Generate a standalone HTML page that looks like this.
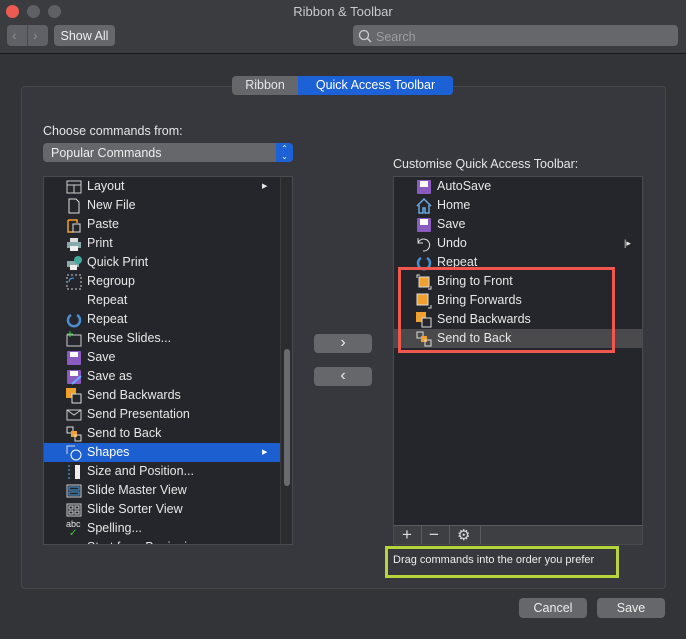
<!DOCTYPE html>
<html><head><meta charset="utf-8"><style>
*{box-sizing:border-box;margin:0;padding:0}
body{width:686px;height:639px;background:#323438;font-family:"Liberation Sans",sans-serif;color:#e6e6e6;position:relative;overflow:hidden;font-size:12px}
.abs{position:absolute}
.title{left:0;top:0;width:686px;height:54px;background:#3b3c40;border-bottom:1px solid #161719}
.dot{width:13px;height:13px;border-radius:50%;top:5px;background:#5f6064}
.btn{background:#65676b;border-radius:4px;color:#eee;text-align:center}
.list{background:#24262b;border:1px solid #4a4b4f}
.row{position:absolute;left:0;height:19px;line-height:19px;font-size:12.5px;color:#e8e8e8;white-space:nowrap}
.row .t{position:absolute;left:43px}
.row .i{position:absolute;left:22px;top:2px;width:16px;height:16px}
</style></head><body>
<div class="abs title"></div>
<div class="abs dot" style="left:6px;background:#ed5a52"></div>
<div class="abs dot" style="left:27px"></div>
<div class="abs dot" style="left:48px"></div>
<div class="abs" style="left:0;width:686px;top:4px;text-align:center;font-size:13px;color:#c9c9cb">Ribbon &amp; Toolbar</div>
<div class="abs btn" style="left:7px;top:25px;width:41px;height:21px;background:#606166"></div>
<div class="abs" style="left:27px;top:25px;width:1px;height:21px;background:#48494d"></div>
<div class="abs" style="left:12px;top:27px;color:#8e8f93;font-size:14px">‹</div>
<div class="abs" style="left:33px;top:27px;color:#8e8f93;font-size:14px">›</div>
<div class="abs btn" style="left:54px;top:25px;width:61px;height:21px;line-height:23px;font-size:12.5px">Show All</div>
<div class="abs" style="left:353px;top:25px;width:325px;height:21px;background:#65676b;border-radius:4px"></div>
<svg class="abs" style="left:358px;top:29px" width="14" height="14"><circle cx="6" cy="6" r="4.5" stroke="#ccc" fill="none" stroke-width="1.3"/><line x1="9.3" y1="9.3" x2="13" y2="13" stroke="#ccc" stroke-width="1.5"/></svg>
<div class="abs" style="left:376px;top:30px;color:#9d9ea2;font-size:12.5px">Search</div>

<div class="abs" style="left:21px;top:86px;width:645px;height:503px;border:1px solid #46474b;border-radius:4px;background:#36383d"></div>
<div class="abs btn" style="left:232px;top:76px;width:221px;height:19px;border-radius:4px"></div>
<div class="abs" style="left:298px;top:76px;width:155px;height:19px;background:#1c61d6;border-radius:0 4px 4px 0"></div>
<div class="abs" style="left:232px;top:78px;width:66px;text-align:center;font-size:12.5px">Ribbon</div>
<div class="abs" style="left:298px;top:78px;width:155px;text-align:center;font-size:12.5px;color:#fff">Quick Access Toolbar</div>

<div class="abs" style="left:43px;top:124px;font-size:12.5px">Choose commands from:</div>
<div class="abs btn" style="left:43px;top:143px;width:250px;height:19px;text-align:left;padding-left:8px;line-height:21px;font-size:12.5px">Popular Commands</div>
<div class="abs" style="left:276px;top:143px;width:17px;height:19px;background:#1c61d6;border-radius:0 4px 4px 0;color:#fff;font-size:8px;text-align:center;line-height:8px;padding-top:2px">⌃<br>⌄</div>
<div class="abs" style="left:393px;top:157px;font-size:12.5px">Customise Quick Access Toolbar:</div>

<div class="abs list" style="left:43px;top:176px;width:250px;height:369px;overflow:hidden">
<div class="abs" style="left:236px;top:0;width:13px;height:369px;background:#2b2c30;border-left:1px solid #3a3b3f"></div>
<div class="abs" style="left:240px;top:172px;width:6px;height:137px;border-radius:3px;background:#6a6b6f"></div>
<div class="row" style="top:0;width:236px"><svg class="i" viewBox="0 0 16 16"><rect x="1" y="2" width="14" height="12" fill="none" stroke="#ccc"/><line x1="1" y1="6" x2="15" y2="6" stroke="#ccc"/><line x1="8" y1="6" x2="8" y2="14" stroke="#ccc"/></svg><span class="t">Layout</span><span style="position:absolute;left:218px;font-size:7px">▶</span></div>
<div class="row" style="top:19px"><svg class="i" viewBox="0 0 16 16"><path d="M3 1h7l3 3v11H3z" fill="none" stroke="#ddd"/></svg><span class="t">New File</span></div>
<div class="row" style="top:38px"><svg class="i" viewBox="0 0 16 16"><path d="M2 3h9v3M2 3v12h5" fill="none" stroke="#f0a030" stroke-width="1.5"/><rect x="7" y="7" width="7" height="8" fill="none" stroke="#ddd"/></svg><span class="t">Paste</span></div>
<div class="row" style="top:57px"><svg class="i" viewBox="0 0 16 16"><rect x="1" y="6" width="14" height="6" fill="#8aa"/><rect x="4" y="2" width="8" height="4" fill="#ddd"/><rect x="4" y="10" width="8" height="5" fill="#eee"/></svg><span class="t">Print</span></div>
<div class="row" style="top:76px"><svg class="i" viewBox="0 0 16 16"><rect x="1" y="6" width="12" height="6" fill="#8aa"/><rect x="4" y="10" width="7" height="5" fill="#eee"/><circle cx="12" cy="5" r="4" fill="#4a9"/></svg><span class="t">Quick Print</span></div>
<div class="row" style="top:95px"><svg class="i" viewBox="0 0 16 16"><rect x="1" y="1" width="14" height="14" fill="none" stroke="#ccc" stroke-dasharray="2 2"/><path d="M3 8q0-4 5-4" stroke="#4af" fill="none"/></svg><span class="t">Regroup</span></div>
<div class="row" style="top:114px"><span class="t">Repeat</span></div>
<div class="row" style="top:133px"><svg class="i" viewBox="0 0 16 16"><path d="M5 3a6 6 0 1 0 6 0" fill="none" stroke="#4a8fd0" stroke-width="2.5"/></svg><span class="t">Repeat</span></div>
<div class="row" style="top:152px"><svg class="i" viewBox="0 0 16 16"><rect x="1" y="4" width="14" height="11" fill="none" stroke="#ccc"/><path d="M4 0v6M1 3h6" stroke="#4c4"/></svg><span class="t">Reuse Slides...</span></div>
<div class="row" style="top:171px"><svg class="i" viewBox="0 0 16 16"><rect x="1" y="1" width="14" height="14" rx="1" fill="#8a5cc0"/><rect x="4" y="2" width="8" height="5" fill="#fff"/></svg><span class="t">Save</span></div>
<div class="row" style="top:190px"><svg class="i" viewBox="0 0 16 16"><rect x="1" y="1" width="14" height="14" rx="1" fill="#8a5cc0"/><rect x="4" y="2" width="8" height="5" fill="#fff"/><line x1="6" y1="15" x2="15" y2="7" stroke="#6af" stroke-width="2"/></svg><span class="t">Save as</span></div>
<div class="row" style="top:209px"><svg class="i" viewBox="0 0 16 16"><rect x="0" y="0" width="10" height="10" fill="#f0a030"/><rect x="6" y="6" width="9" height="9" fill="#24262b" stroke="#ddd"/></svg><span class="t">Send Backwards</span></div>
<div class="row" style="top:228px"><svg class="i" viewBox="0 0 16 16"><rect x="1" y="3" width="14" height="10" fill="none" stroke="#ccc"/><path d="M1 3l7 5 7-5" stroke="#ccc" fill="none"/></svg><span class="t">Send Presentation</span></div>
<div class="row" style="top:247px"><svg class="i" viewBox="0 0 16 16"><rect x="1" y="1" width="6" height="6" fill="none" stroke="#ddd"/><rect x="5" y="5" width="6" height="6" fill="#f0a030"/><rect x="9" y="9" width="6" height="6" fill="none" stroke="#ddd"/></svg><span class="t">Send to Back</span></div>
<div class="row" style="top:266px;width:236px;background:#1c5fd1;color:#fff"><svg class="i" viewBox="0 0 16 16"><path d="M1 9V1h8" stroke="#ddd" fill="none"/><circle cx="10" cy="10" r="5" fill="none" stroke="#fff"/></svg><span class="t">Shapes</span><span style="position:absolute;left:218px;font-size:7px">▶</span></div>
<div class="row" style="top:285px"><svg class="i" viewBox="0 0 16 16"><rect x="9" y="1" width="5" height="14" fill="#eee"/><path d="M3 1v14" stroke="#6af" stroke-dasharray="2 2"/></svg><span class="t">Size and Position...</span></div>
<div class="row" style="top:304px"><svg class="i" viewBox="0 0 16 16"><rect x="1" y="2" width="14" height="12" fill="none" stroke="#ccc"/><rect x="3" y="4" width="10" height="3" fill="none" stroke="#4a9ee0"/><rect x="3" y="9" width="10" height="3" fill="none" stroke="#4a9ee0"/></svg><span class="t">Slide Master View</span></div>
<div class="row" style="top:323px"><svg class="i" viewBox="0 0 16 16"><rect x="1" y="2" width="14" height="12" fill="none" stroke="#ccc"/><rect x="3" y="4" width="4" height="3" fill="none" stroke="#ccc"/><rect x="9" y="4" width="4" height="3" fill="none" stroke="#ccc"/><rect x="3" y="9" width="4" height="3" fill="none" stroke="#ccc"/><rect x="9" y="9" width="4" height="3" fill="none" stroke="#ccc"/></svg><span class="t">Slide Sorter View</span></div>
<div class="row" style="top:342px"><span style="position:absolute;left:22px;top:-4px;font-size:9px">abc</span><span style="position:absolute;left:25px;top:5px;color:#4c4;font-size:10px">✓</span><span class="t">Spelling...</span></div>
<div class="row" style="top:361px"><span class="t">Start from Beginning</span></div>
</div>

<div class="abs btn" style="left:314px;top:334px;width:58px;height:19px;line-height:18px;font-size:16px">›</div>
<div class="abs btn" style="left:314px;top:367px;width:58px;height:19px;line-height:18px;font-size:16px">‹</div>

<div class="abs list" style="left:393px;top:176px;width:250px;height:369px;overflow:hidden">
<div class="row" style="top:0"><svg class="i" viewBox="0 0 16 16"><rect x="1" y="1" width="14" height="14" rx="1" fill="#8a5cc0"/><rect x="4" y="2" width="8" height="6" fill="#fff"/></svg><span class="t">AutoSave</span></div>
<div class="row" style="top:19px"><svg class="i" viewBox="0 0 16 16"><path d="M1 8L8 1l7 7M3 7v8h4v-5h2v5h4V7" fill="none" stroke="#6aa8e0" stroke-width="1.5"/></svg><span class="t">Home</span></div>
<div class="row" style="top:38px"><svg class="i" viewBox="0 0 16 16"><rect x="1" y="1" width="14" height="14" rx="1" fill="#8a5cc0"/><rect x="4" y="2" width="8" height="6" fill="#fff"/></svg><span class="t">Save</span></div>
<div class="row" style="top:57px"><svg class="i" viewBox="0 0 16 16"><path d="M2 2v5h5M2 7a6 6 0 1 1 5 8" fill="none" stroke="#ddd"/></svg><span class="t">Undo</span><span style="position:absolute;left:230px;font-size:9px">|▸</span></div>
<div class="row" style="top:76px"><svg class="i" viewBox="0 0 16 16"><path d="M5 3a6 6 0 1 0 6 0" fill="none" stroke="#4a8fd0" stroke-width="2.5"/></svg><span class="t">Repeat</span></div>
<div class="row" style="top:95px"><svg class="i" viewBox="0 0 16 16"><path d="M1 4V1h3M15 12v3h-3" stroke="#ddd" fill="none"/><rect x="3" y="3" width="10" height="10" fill="#f0a030" stroke="#ddd"/></svg><span class="t">Bring to Front</span></div>
<div class="row" style="top:114px"><svg class="i" viewBox="0 0 16 16"><path d="M15 12v3h-3" stroke="#ddd" fill="none"/><rect x="1" y="1" width="11" height="11" fill="#f0a030" stroke="#ddd"/></svg><span class="t">Bring Forwards</span></div>
<div class="row" style="top:133px"><svg class="i" viewBox="0 0 16 16"><rect x="0" y="0" width="10" height="10" fill="#f0a030"/><rect x="6" y="6" width="9" height="9" fill="#24262b" stroke="#ddd"/></svg><span class="t">Send Backwards</span></div>
<div class="row" style="top:152px;width:248px;background:#4a4a4c"><svg class="i" viewBox="0 0 16 16"><rect x="1" y="1" width="6" height="6" fill="none" stroke="#ddd"/><rect x="5" y="5" width="6" height="6" fill="#f0a030"/><rect x="9" y="9" width="6" height="6" fill="none" stroke="#ddd"/></svg><span class="t">Send to Back</span></div>
<div class="abs" style="left:0;top:348px;width:248px;height:20px;background:#3e3f43;border-top:1px solid #5a5b5f"></div>
<div class="abs" style="left:27px;top:349px;width:1px;height:20px;background:#5a5b5f"></div>
<div class="abs" style="left:55px;top:349px;width:1px;height:20px;background:#5a5b5f"></div>
<div class="abs" style="left:86px;top:349px;width:1px;height:20px;background:#5a5b5f"></div>
<div class="abs" style="left:8px;top:348px;font-size:17px;color:#ddd">+</div>
<div class="abs" style="left:35px;top:348px;font-size:17px;color:#ddd">−</div>
<div class="abs" style="left:63px;top:349px;font-size:15px;color:#ddd">⚙</div>
</div>

<div class="abs" style="left:398px;top:267px;width:217px;height:86px;border:3px solid #f0574e"></div>
<div class="abs" style="left:385px;top:546px;width:234px;height:32px;border:3px solid #b6d53a"></div>
<div class="abs" style="left:393px;top:554px;font-size:11px;color:#eee">Drag commands into the order you prefer</div>

<div class="abs btn" style="left:519px;top:598px;width:68px;height:20px;line-height:21px;font-size:12.5px">Cancel</div>
<div class="abs btn" style="left:597px;top:598px;width:68px;height:20px;line-height:21px;font-size:12.5px">Save</div>
</body></html>
